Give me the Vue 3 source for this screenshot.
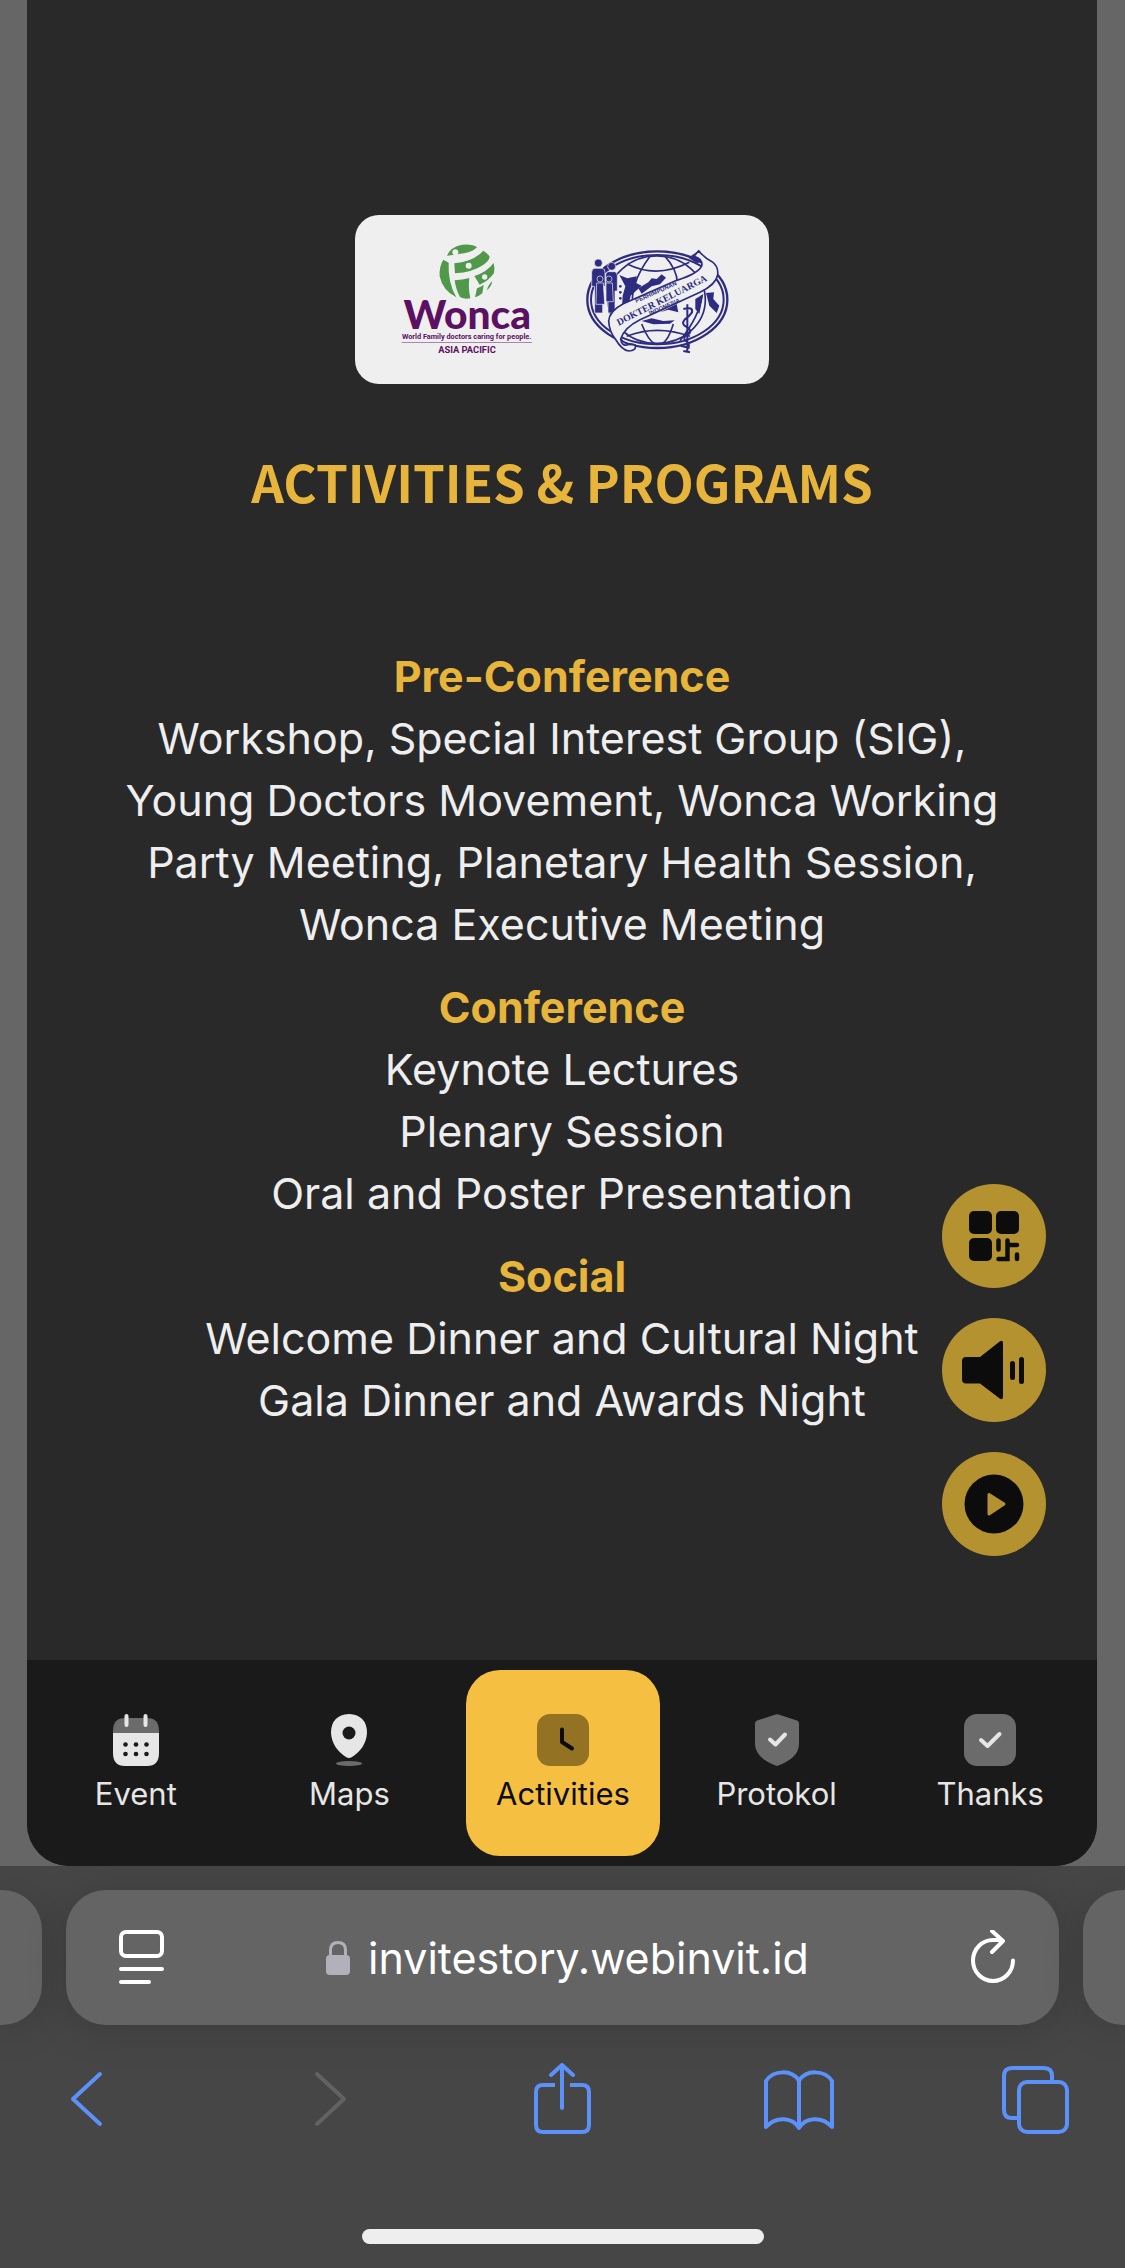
<script setup>
const sections = [
  {
    title: 'Pre-Conference',
    lines: [
      'Workshop, Special Interest Group (SIG),',
      'Young Doctors Movement, Wonca Working',
      'Party Meeting, Planetary Health Session,',
      'Wonca Executive Meeting',
    ],
  },
  {
    title: 'Conference',
    lines: ['Keynote Lectures', 'Plenary Session', 'Oral and Poster Presentation'],
  },
  {
    title: 'Social',
    lines: ['Welcome Dinner and Cultural Night', 'Gala Dinner and Awards Night'],
  },
]

const tabs = [
  { id: 'event', label: 'Event' },
  { id: 'maps', label: 'Maps' },
  { id: 'activities', label: 'Activities' },
  { id: 'protokol', label: 'Protokol' },
  { id: 'thanks', label: 'Thanks' },
]
const active = 'activities'
</script>

<template>
  <div class="page">
    <div class="stage">
      <div class="panel">
        <main class="content">
          <div class="logos">
            <svg class="wonca" viewBox="185 125 396 336" role="img" aria-label="Wonca Asia Pacific">
              <g fill="#50984a">
                <path d="M323 163Q333 137 368 130Q400 127 413 138Q402 150 378 155Q348 160 323 163Z" />
                <path d="M345 186Q402 181 432 148Q445 156 451 166Q450 178 430 192Q400 213 347 216Z" />
                <path d="M312 175L328 184Q325 243 351 288Q310 268 301 225Q299 195 312 175Z" />
                <path d="M346 237Q370 236 390 230Q386 258 393 291Q376 295 362 287Q350 266 346 237Z" />
                <path d="M405 224Q442 213 463 185Q467 200 464 215Q450 237 421 250Q415 240 405 224Z" />
                <path d="M413 261Q425 256 433 250L429 276Q420 284 407 288Z" />
                <path d="M443 267Q445 252 459 239Q456 256 443 267Z" />
              </g>
              <g fill="#efefef">
                <circle cx="348" cy="153" r="9" />
                <circle cx="388" cy="193" r="9" />
                <circle cx="436" cy="227" r="8" />
              </g>
              <g fill="#5c1062" text-anchor="middle">
                <text class="wordmark" x="384" y="382">Wonca</text>
                <text class="tagline" x="382" y="412">World Family doctors caring for people.</text>
                <rect x="187" y="423" width="391" height="2" opacity=".7" />
                <text class="region" x="383" y="454">ASIA PACIFIC</text>
              </g>
            </svg>
            <svg class="pdki" viewBox="735 150 435 315" role="img" aria-label="Perhimpunan Dokter Keluarga Indonesia">
              <g fill="none" stroke="#2e2c80" stroke-width="5">
                <ellipse cx="952" cy="302" rx="210" ry="145" stroke-width="7" />
                <ellipse cx="952" cy="302" rx="199" ry="134" stroke-width="6" />
                <ellipse cx="950" cy="302" rx="146" ry="131" stroke-width="5" />
                <path d="M930 172Q865 260 880 330M975 172Q1010 210 1012 250M905 375Q925 425 945 435M1000 375Q985 425 965 435M862 195Q950 240 1048 190M860 412Q950 376 1050 412M1085 290Q1080 350 1020 425" />
              </g>
              <g fill="#2e2c80">
                <path d="M838 228L862 238L890 232L888 252L905 260L872 290L866 318L846 324L848 290L856 262Z" />
                <path d="M895 268L925 250L935 238L950 240L965 226L978 236L960 256L935 262L905 284Z" />
                <path d="M1045 176L1076 155L1090 190L1070 192Z" />
                <path d="M1066 300L1090 285L1078 345L1066 330Z" />
                <path d="M1098 282L1122 280L1120 300L1138 320L1130 342L1108 320Z" />
                <path d="M905 366L935 358L970 366L1004 364L990 374L940 376Z" />
                <path d="M960 340L1010 315L1015 340L985 332Z" />
                <circle cx="886" cy="255" r="4" />
                <circle cx="841" cy="262" r="4" /><circle cx="841" cy="280" r="4" /><circle cx="841" cy="298" r="4" />
                <path d="M790 205L800 198L806 214L796 218Z" />
              </g>
              <g stroke="#efefef" stroke-width="2" fill="#2e2c80">
                <circle cx="775" cy="192" r="12" />
                <circle cx="815" cy="202" r="12" />
                <path d="M764 208H786Q795 209 795 220V262H788V342H764V262H755V220Q755 210 764 208Z" />
                <path d="M804 218H824Q832 220 832 230V276H825V342H804V276H797V228Q797 220 804 218Z" />
                <circle cx="780" cy="240" r="9" />
                <circle cx="807" cy="240" r="9" />
                <path d="M770 252H790L794 316H768Z" />
                <path d="M798 252H817L820 308H798Z" />
              </g>
              <path d="M1076 155Q1092 176 1116 188Q1136 202 1133 228Q1128 256 1080 280L900 362Q852 386 842 420Q852 436 886 438Q890 455 866 456Q846 454 826 420Q808 398 806 366Q808 336 850 314L1010 244Q1080 222 1086 198Q1086 178 1062 172Z" fill="#efefef" stroke="#2e2c80" stroke-width="5" stroke-linejoin="round" />
              <path d="M842 420Q846 442 860 438Q880 432 886 440" fill="none" stroke="#2e2c80" stroke-width="5" />
              <path d="M1042 316V458M1030 330Q1060 322 1056 340Q1048 352 1034 362Q1022 376 1040 384Q1056 392 1048 404Q1028 412 1034 424Q1050 430 1046 446L1022 440M1030 456L1050 460" fill="none" stroke="#2e2c80" stroke-width="6" />
              <g fill="#2e2c80">
                <text class="seal-small" transform="translate(889 312) rotate(-24)">PERHIMPUNAN</text>
                <text class="seal-main" transform="translate(836 380) rotate(-27)">DOKTER KELUARGA</text>
                <text class="seal-small" transform="translate(930 349) rotate(-24)">INDONESIA</text>
              </g>
            </svg>
          </div>

          <h1>ACTIVITIES &amp; PROGRAMS</h1>

          <section v-for="s in sections" :key="s.title" class="program">
            <h2>{{ s.title }}</h2>
            <p v-for="line in s.lines" :key="line">{{ line }}</p>
          </section>

          <div class="floating">
            <button type="button" aria-label="QR code">
              <svg width="60" height="60" viewBox="0 0 60 60" fill="#0c0c0c">
                <rect x="5" y="5" width="23" height="23" rx="5" />
                <rect x="32" y="5" width="23" height="23" rx="5" />
                <rect x="5" y="32" width="23" height="23" rx="5" />
                <path d="M34.500 34.500V43.500M34.500 53H43.500V34.500M43.500 39H53M53 48.500V53" fill="none" stroke="#0c0c0c" stroke-width="4.500" stroke-linecap="round" />
              </svg>
            </button>
            <button type="button" aria-label="Sound">
              <svg width="64" height="60" viewBox="0 0 64 60" fill="#0c0c0c">
                <path d="M4 17H18L38 1.200Q41 0 41 3V57Q41 60 38 58.800L18 43.500H4Q0 43.500 0 39V21Q0 17 4 17Z" />
                <rect x="48" y="21" width="5" height="19" rx="2.500" />
                <rect x="57" y="17" width="5" height="27" rx="2.500" />
              </svg>
            </button>
            <button type="button" aria-label="Play">
              <svg width="60" height="60" viewBox="0 0 60 60">
                <circle cx="30" cy="30" r="29.500" fill="#0c0c0c" />
                <path d="M25 20.500L40 30L25 40Z" fill="#b49230" stroke="#b49230" stroke-width="3" stroke-linejoin="round" />
              </svg>
            </button>
          </div>
        </main>

        <nav class="tabs">
          <a v-for="t in tabs" :key="t.id" href="#" :class="{ active: t.id === active }">
            <svg width="52" height="52" viewBox="0 0 52 52" aria-hidden="true">
              <template v-if="t.id === 'event'">
                <path d="M3 19V17Q3 4 15 4H37Q49 4 49 17V19Z" fill="#6b6b6b" />
                <path d="M3 19H49V39Q49 52 37 52H15Q3 52 3 39Z" fill="#e6e6e6" />
                <path d="M16.500 2V11M35.500 2V11" stroke="#e6e6e6" stroke-width="4" stroke-linecap="round" />
                <g fill="#1a1a1a">
                  <circle cx="15.500" cy="30.500" r="2.300" /><circle cx="26" cy="30.500" r="2.300" /><circle cx="36.500" cy="30.500" r="2.300" />
                  <circle cx="15.500" cy="40" r="2.300" /><circle cx="26" cy="40" r="2.300" /><circle cx="36.500" cy="40" r="2.300" />
                </g>
              </template>
              <template v-else-if="t.id === 'maps'">
                <path d="M26 0Q44 1 44 19Q43 34 29 43Q26 45 23 43Q9 34 8 19Q8 1 26 0Z" fill="#e6e6e6" />
                <circle cx="26" cy="19" r="6.500" fill="#1a1a1a" />
                <ellipse cx="26" cy="49.500" rx="13" ry="2.500" fill="#6b6b6b" />
              </template>
              <template v-else-if="t.id === 'activities'">
                <rect width="52" height="52" rx="13" fill="#937223" />
                <path d="M25 15.500V28L35 34.500" fill="none" stroke="#0c0c0c" stroke-width="4" stroke-linecap="round" stroke-linejoin="round" />
              </template>
              <template v-else-if="t.id === 'protokol'">
                <path d="M24.500 .500Q26 0 27.500 .500L46 6.500Q48 7.500 48 9.500V30Q48 44 26 52Q4 44 4 30V9.500Q4 7.500 6 6.500Z" fill="#6b6b6b" />
                <path d="M19 25.500L24.500 30.500L34 20.500" fill="none" stroke="#e6e6e6" stroke-width="4" stroke-linecap="round" stroke-linejoin="round" />
              </template>
              <template v-else>
                <rect width="52" height="52" rx="13" fill="#6b6b6b" />
                <path d="M17 26L23.500 32L35.500 20" fill="none" stroke="#e6e6e6" stroke-width="4" stroke-linecap="round" stroke-linejoin="round" />
              </template>
            </svg>
            <span>{{ t.label }}</span>
          </a>
        </nav>
      </div>
    </div>

    <footer class="browser">
      <div class="address-row">
        <div class="side-tab left"></div>
        <div class="address">
          <button type="button" aria-label="Page menu">
            <svg width="46" height="56" viewBox="0 0 46 56" fill="none" stroke="#fff" stroke-width="4" stroke-linecap="round">
              <rect x="2" y="2" width="41" height="24" rx="5" />
              <path d="M2 39H43M2 52H30" />
            </svg>
          </button>
          <button type="button" class="url">
            <svg width="24" height="36" viewBox="0 0 24 36">
              <path d="M4.500 16V10Q4.500 2.500 12 2.500Q19.500 2.500 19.500 10V16" fill="none" stroke="#b2b1b9" stroke-width="3" />
              <rect y="15" width="24" height="20" rx="4" fill="#b2b1b9" />
            </svg>
            <span>invitestory.webinvit.id</span>
          </button>
          <button type="button" aria-label="Reload">
            <svg width="46" height="56" viewBox="0 0 46 56" fill="none" stroke="#fff" stroke-width="4" stroke-linecap="round" stroke-linejoin="round">
              <path d="M43 30.500A20 20.500 0 1 1 23 10H32M22 1L33 11L22 22" />
            </svg>
          </button>
        </div>
        <div class="side-tab right"></div>
      </div>

      <div class="toolbar">
        <button type="button" aria-label="Back">
          <svg viewBox="0 0 72 72"><path d="M50 11L23 36L50 61" /></svg>
        </button>
        <button type="button" aria-label="Forward" disabled>
          <svg viewBox="0 0 72 72"><path d="M29 11L56 36L29 61" /></svg>
        </button>
        <button type="button" aria-label="Share">
          <svg viewBox="0 0 72 72"><path d="M30 22H18Q11 22 11 29V62Q11 69 18 69H57Q64 69 64 62V29Q64 22 57 22H45" stroke-linecap="butt" /><path d="M37 45V2M26 12L37 2L48 12" /></svg>
        </button>
        <button type="button" aria-label="Bookmarks">
          <svg viewBox="0 0 72 72"><path d="M36 18V65C30 55 14 52 3 64V18C10 7 29 6 36 18C43 6 62 7 69 18V64C58 52 42 55 36 65" /></svg>
        </button>
        <button type="button" aria-label="Tabs">
          <svg viewBox="0 0 72 72"><path d="M18 55H12Q4 55 4 47V13Q4 5 12 5H44Q52 5 52 13V19" stroke-linecap="butt" /><rect x="19" y="19" width="48" height="50" rx="8" /></svg>
        </button>
      </div>
      <div class="home-bar"></div>
    </footer>
  </div>
</template>

<style>
body {
  margin: 0;
  background: #464646;
}
</style>

<style scoped>
.page {
  font-family: Inter, "Liberation Sans", sans-serif;
}
button {
  border: 0;
  padding: 0;
  background: none;
  color: inherit;
  font: inherit;
}
svg {
  display: block;
  flex: none;
}
.stage {
  padding: 0 28px 0 27px;
  background: #666;
}
.panel {
  overflow: hidden;
  border-radius: 0 0 42px 42px;
  background: #292929;
}
.content {
  position: relative;
  padding: 215px 40px 208px;
  text-align: center;
}
.logos {
  display: flex;
  justify-content: space-between;
  align-items: center;
  box-sizing: border-box;
  width: 414px;
  height: 169px;
  margin: 0 auto;
  padding: 0 39px 2px 46px;
  border-radius: 24px;
  background: #efefef;
}
.wonca {
  width: 132px;
  height: 112px;
}
.pdki {
  width: 145px;
  height: 105px;
  margin-top: 6px;
}
.wordmark {
  font: 900 122px Lato, sans-serif;
}
.tagline {
  font: 700 22px Roboto, sans-serif;
}
.region {
  font: 700 28px Roboto, sans-serif;
}
.seal-small {
  font: 700 18px "Liberation Sans", sans-serif;
}
.seal-main {
  font: 700 29px "Liberation Serif", serif;
}
h1 {
  margin: 57px 0 124px;
  color: #e7b53b;
  font: 700 51px/80px "Noto Sans CJK SC", sans-serif;
}
.program {
  margin-bottom: 21px;
  font-size: 43px;
  line-height: 62px;
  color: #eee;
}
.program h2,
.program p {
  margin: 0;
  font-size: inherit;
  font-weight: 400;
}
.program h2 {
  color: #e7b53b;
  font-weight: 700;
}
.floating {
  position: absolute;
  right: 51px;
  bottom: 104px;
  display: flex;
  flex-direction: column;
  gap: 30px;
}
.floating button {
  display: grid;
  place-items: center;
  width: 104px;
  height: 104px;
  border-radius: 50%;
  background: #b49230;
}
.tabs {
  display: grid;
  grid-template-columns: repeat(5, minmax(0, 1fr));
  padding: 10px 0 10px 2px;
  background: #1a1a1a;
}
.tabs a {
  display: flex;
  flex-direction: column;
  align-items: center;
  gap: 10px;
  margin: 0 10px;
  padding: 44px 0;
  border-radius: 34px;
  color: #e6e6e6;
  font-size: 31px;
  line-height: 36px;
  text-decoration: none;
}
.tabs a.active {
  background: #f5bf42;
  color: #0c0c0c;
}
.browser {
  padding: 24px 0;
  overflow: hidden;
  background: #464646;
}
.address-row {
  display: flex;
  gap: 24px;
}
.side-tab,
.address {
  height: 135px;
  background: #646464;
  box-shadow: 0 4px 40px rgba(0, 0, 0, 0.16);
}
.side-tab {
  width: 42px;
}
.left {
  border-radius: 0 40px 40px 0;
}
.right {
  border-radius: 40px 0 0 40px;
}
.address {
  flex: 1;
  display: flex;
  align-items: center;
  justify-content: space-between;
  box-sizing: border-box;
  padding: 0 43px 0 53px;
  border-radius: 40px;
}
.url {
  display: flex;
  align-items: center;
  gap: 18px;
  color: #fff;
  font-size: 43px;
  line-height: 56px;
}
.toolbar {
  display: flex;
  justify-content: space-between;
  margin-top: 38px;
  padding: 0 53px 0 50px;
}
.toolbar svg {
  width: 72px;
  height: 72px;
  fill: none;
  stroke: #5b91f8;
  stroke-width: 4;
  stroke-linecap: round;
  stroke-linejoin: round;
}
.toolbar button:disabled svg {
  stroke: #626262;
}
.home-bar {
  width: 402px;
  height: 15px;
  margin: 94px auto 0;
  border-radius: 8px;
  background: #eee;
}
</style>
